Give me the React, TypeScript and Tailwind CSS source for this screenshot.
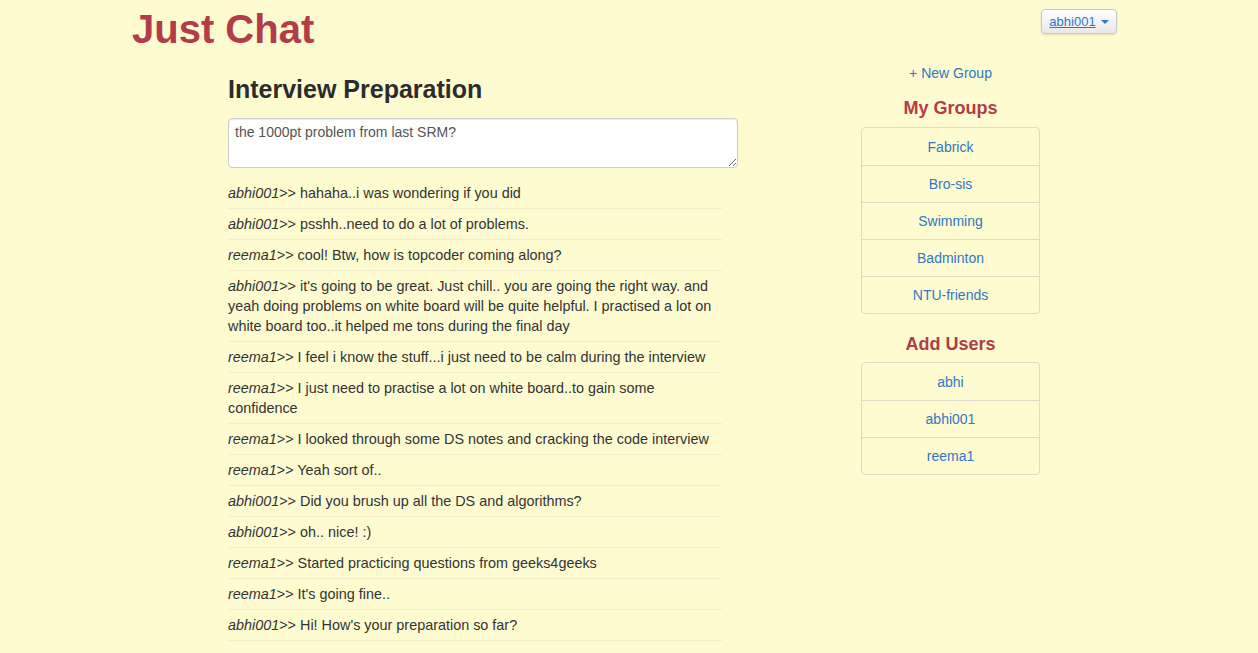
import { useState } from "react";

interface Message {
    user: string;
    text: string;
}

const messages: Message[] = [
    { user: "abhi001", text: "hahaha..i was wondering if you did" },
    { user: "abhi001", text: "psshh..need to do a lot of problems." },
    { user: "reema1", text: "cool! Btw, how is topcoder coming along?" },
    {
        user: "abhi001",
        text: "it's going to be great. Just chill.. you are going the right way. and yeah doing problems on white board will be quite helpful. I practised a lot on white board too..it helped me tons during the final day",
    },
    { user: "reema1", text: "I feel i know the stuff...i just need to be calm during the interview" },
    { user: "reema1", text: "I just need to practise a lot on white board..to gain some confidence" },
    { user: "reema1", text: "I looked through some DS notes and cracking the code interview" },
    { user: "reema1", text: "Yeah sort of.." },
    { user: "abhi001", text: "Did you brush up all the DS and algorithms?" },
    { user: "abhi001", text: "oh.. nice! :)" },
    { user: "reema1", text: "Started practicing questions from geeks4geeks" },
    { user: "reema1", text: "It's going fine.." },
    { user: "abhi001", text: "Hi! How's your preparation so far?" },
];

const groups = ["Fabrick", "Bro-sis", "Swimming", "Badminton", "NTU-friends"];
const users = ["abhi", "abhi001", "reema1"];

const LinkList = ({ items }: { items: string[] }) => (
    <div className="w-[179px] rounded-[4px] border border-[#dedcc6]">
        {items.map((item, i) => (
            <div
                key={item}
                className={`h-[37px] flex items-center justify-center text-[14px] text-[#2f78c4] ${
                    i > 0 ? "border-t border-[#dedcc6]" : ""
                }`}
            >
                {item}
            </div>
        ))}
    </div>
);

const App = () => {
    const [draft, setDraft] = useState("the 1000pt problem from last SRM?");

    return (
        <div
            className="min-h-screen bg-[#fefbd1] text-[#333333] text-[14px] leading-[20px]"
            style={{ fontFamily: '"Liberation Sans", Arial, sans-serif' }}
        >
            <div className="flex items-start justify-between pl-[132px] pr-[141px]">
                <h1 className="mt-[9px] text-[40px] leading-[40px] font-bold text-[#b23c47]">Just Chat</h1>
                <button className="mt-[9px] h-[25px] w-[76px] flex items-center justify-center gap-[5px] rounded-[4px] border border-[#c8c8c8] bg-gradient-to-b from-white to-[#e8e8e8] shadow-[0_1px_2px_rgba(0,0,0,0.12)]">
                    <span className="text-[13px] text-[#2f78c4] underline">abhi001</span>
                    <span className="w-0 h-0 border-l-[4px] border-r-[4px] border-t-[4px] border-l-transparent border-r-transparent border-t-[#2f78c4]" />
                </button>
            </div>

            <div className="flex items-start">
                <div className="ml-[228px] w-[510px]">
                    <h2 className="mt-[25px] text-[25px] leading-[30px] font-bold text-[#2c2c2c]">Interview Preparation</h2>
                    <textarea
                        value={draft}
                        onChange={(e) => setDraft(e.target.value)}
                        className="mt-[14px] block w-[510px] h-[50px] rounded-[4px] border border-[#cccccc] bg-white px-[6px] py-[3px] text-[14px] leading-[20px] text-[#555555] shadow-[inset_0_1px_1px_rgba(0,0,0,0.075)] outline-none"
                    />
                    <div className="mt-[10px] w-[494px] text-[14.4px]">
                        {messages.map((m, i) => (
                            <div key={i} className="py-[5px] border-b border-[#f1eecb]">
                                <i>{m.user}</i>&gt;&gt; {m.text}
                            </div>
                        ))}
                    </div>
                </div>

                <div className="ml-[123px] w-[179px] flex flex-col items-center">
                    <div className="mt-[14px] text-[14px] text-[#2f78c4]">+ New Group</div>
                    <h3 className="mt-[14px] text-[18px] leading-[22px] font-bold text-[#b23c47]">My Groups</h3>
                    <div className="mt-[8px]">
                        <LinkList items={groups} />
                    </div>
                    <h3 className="mt-[19px] text-[18px] leading-[22px] font-bold text-[#b23c47]">Add Users</h3>
                    <div className="mt-[7px]">
                        <LinkList items={users} />
                    </div>
                </div>
            </div>
        </div>
    );
};

export default App;
